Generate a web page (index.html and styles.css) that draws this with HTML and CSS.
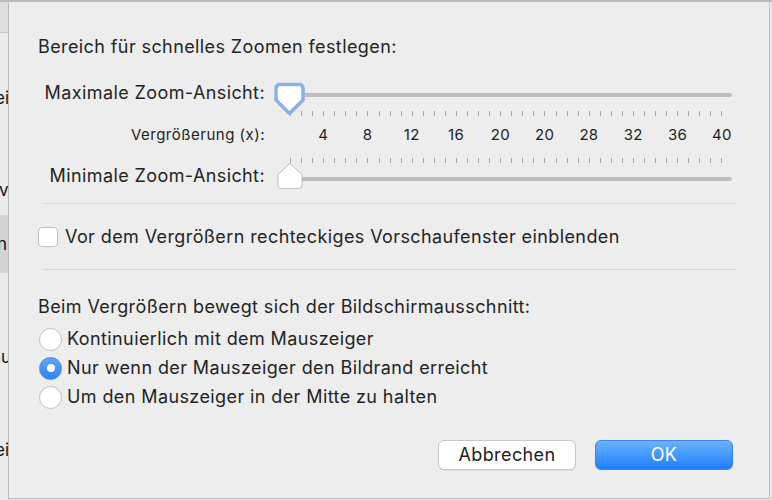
FILE: index.html
```html
<!DOCTYPE html>
<html lang="de">
<head>
<meta charset="utf-8">
<title>Zoom</title>
<link rel="stylesheet" href="styles.css">
</head>
<body>
<div class="screen">
  <aside class="bgwin">
    <div class="bg-head"></div>
    <div class="bg-item it1"><span>ei</span></div>
    <div class="bg-item it2"><span>ve</span></div>
    <div class="bg-item it3 selected"><span>n</span></div>
    <div class="bg-item it4"><span>nu</span></div>
    <div class="bg-item it5"><span>ei</span></div>
  </aside>
  <section class="dialog">
    <h1 class="title">Bereich für schnelles Zoomen festlegen:</h1>
    <div class="zoom-grid">
      <div class="lbl lbl-max">Maximale Zoom-Ansicht:</div>
      <div class="slider slider-max">
        <div class="track"></div>
        <div class="ticks"><i></i><i></i><i></i><i></i><i></i><i></i><i></i><i></i><i></i><i></i><i></i><i></i><i></i><i></i><i></i><i></i><i></i><i></i><i></i><i></i><i></i><i></i><i></i><i></i><i></i><i></i><i></i><i></i><i></i><i></i><i></i><i></i><i></i><i></i><i></i><i></i><i></i><i></i><i></i><i></i></div>
        <svg class="thumb thumb-down" width="32" height="34" viewBox="0 0 32 34">
          <path d="M6,2.5 H25 Q29,2.5 29,6.5 V18 L15.5,31.5 L2,18 V6.5 Q2,2.5 6,2.5 Z" fill="#ffffff" stroke="#8db0e6" stroke-width="3.5" stroke-linejoin="round"/>
        </svg>
      </div>
      <div class="lbl lbl-small">Vergrößerung (x):</div>
      <div class="nums"><span>4</span><span>8</span><span>12</span><span>16</span><span>20</span><span>20</span><span>28</span><span>32</span><span>36</span><span>40</span></div>
      <div class="lbl lbl-min">Minimale Zoom-Ansicht:</div>
      <div class="slider slider-min">
        <div class="ticks"><i></i><i></i><i></i><i></i><i></i><i></i><i></i><i></i><i></i><i></i><i></i><i></i><i></i><i></i><i></i><i></i><i></i><i></i><i></i><i></i><i></i><i></i><i></i><i></i><i></i><i></i><i></i><i></i><i></i><i></i><i></i><i></i><i></i><i></i><i></i><i></i><i></i><i></i><i></i><i></i></div>
        <div class="track"></div>
        <svg class="thumb thumb-up" width="28" height="28" viewBox="0 0 28 28">
          <path d="M14,1.5 L26,12.5 V23 Q26,26.5 22.5,26.5 H5.5 Q2,26.5 2,23 V12.5 Z" fill="#ffffff" stroke="#c4c4c4" stroke-width="1" stroke-linejoin="round"/>
        </svg>
      </div>
    </div>
    <div class="sep"></div>
    <div class="check-row"><span class="checkbox"></span><span>Vor dem Vergrößern rechteckiges Vorschaufenster einblenden</span></div>
    <div class="sep sep2"></div>
    <p class="question">Beim Vergrößern bewegt sich der Bildschirmausschnitt:</p>
    <div class="radios">
      <div class="radio-row"><span class="radio"></span><span>Kontinuierlich mit dem Mauszeiger</span></div>
      <div class="radio-row"><span class="radio on"></span><span>Nur wenn der Mauszeiger den Bildrand erreicht</span></div>
      <div class="radio-row"><span class="radio"></span><span>Um den Mauszeiger in der Mitte zu halten</span></div>
    </div>
    <div class="buttons">
      <button class="btn btn-cancel">Abbrechen</button>
      <button class="btn btn-ok">OK</button>
    </div>
  </section>
</div>
</body>
</html>
```

FILE: styles.css
```css
html, body {
  margin: 0;
  padding: 0;
}
body {
  width: 772px;
  height: 500px;
  overflow: hidden;
  background: #e8e8e8;
  font-family: "Inter", "Liberation Sans", sans-serif;
  color: #242424;
}
.screen {
  display: flex;
  height: 498px;
  border-top: 2px solid #b9b9b9;
}
.bgwin {
  width: 8px;
  flex: none;
  overflow: hidden;
  background: #ebebeb;
  display: flex;
  flex-direction: column;
}
.bg-head {
  height: 30px;
  flex: none;
  background: #dddddd;
  border-bottom: 1px solid #c5c5c5;
}
.bg-item {
  display: flex;
  justify-content: flex-start;
  align-items: center;
  height: 22px;
  font-size: 17px;
  line-height: 22px;
  color: #111;
  white-space: nowrap;
  flex: none;
}
.it1 { margin-top: 54px; }
.it1 span, .it5 span { margin-left: -5px; }
.it2 { margin-top: 70px; }
.it2 span { margin-left: -1px; letter-spacing: -1px; }
.it3 { margin-top: 14px; height: 58px; background: #d3d3d3; }
.it3 span { margin-left: -3px; }
.it4 { margin-top: 73px; }
.it4 span { margin-left: -9px; }
.it5 { margin-top: 71px; }

.dialog {
  flex: none;
  width: 695px;
  height: 462px;
  margin-top: 1px;
  padding: 33px 36px 0 29px;
  background: #ededed;
  border-left: 1px solid #b8b8b8;
  border-right: 1px solid #c2c2c2;
  border-bottom: 1px solid #bdbdbd;
  display: flex;
  flex-direction: column;
  font-size: 18px;
  line-height: 22px;
  letter-spacing: 0.4px;
}
.title {
  margin: 0;
  font-size: 18px;
  font-weight: 400;
  line-height: 22px;
}
.zoom-grid {
  margin-top: 22px;
  display: grid;
  grid-template-columns: 227px 457px;
  grid-template-rows: 40px 30px 45px;
  column-gap: 11px;
}
.lbl {
  text-align: right;
  white-space: nowrap;
}
.lbl-max { margin-top: 2px; }
.lbl-min { margin-top: 15px; }
.lbl-small {
  font-size: 15px;
  line-height: 20px;
  margin-top: 5px;
  letter-spacing: 0.5px;
  color: #1e1e1e;
}
.slider {
  position: relative;
  display: flex;
  flex-direction: column;
}
.track {
  margin-left: 14px;
  width: 442px;
  height: 4px;
  border-radius: 2px;
  background: #bdbdbd;
  flex: none;
}
.ticks {
  margin-left: 14px;
  width: 433px;
  height: 5px;
  display: flex;
  justify-content: space-between;
  flex: none;
}
.ticks i {
  width: 1px;
  height: 5px;
  background: #a4a4a4;
}
.slider-max .track { margin-top: 13px; }
.slider-max .ticks { margin-top: 14px; }
.slider-min .ticks { margin-top: 8px; }
.slider-min .track { margin-top: 14px; }
.thumb {
  position: absolute;
  display: block;
}
.thumb-down { left: -2px; top: 2px; }
.thumb-up { left: 0px; top: 12px; filter: drop-shadow(0 0.5px 0.5px rgba(0,0,0,0.15)); }

.nums {
  margin-left: 25px;
  width: 443px;
  display: grid;
  grid-template-columns: repeat(10, 44.3px);
  font-size: 15px;
  line-height: 20px;
  margin-top: 5px;
  letter-spacing: 0.3px;
  color: #1e1e1e;
}
.nums span {
  display: flex;
  justify-content: center;
  white-space: nowrap;
}

.sep {
  height: 1px;
  background: #d6d6d6;
  margin: 8px -4px 0 5px;
  flex: none;
}
.sep2 { margin-top: 21px; }
.check-row {
  margin-top: 22px;
  display: flex;
  align-items: center;
  height: 22px;
  white-space: nowrap;
}
.checkbox {
  width: 18px;
  height: 18px;
  border: 1px solid #bdbdbd;
  border-radius: 4px;
  background: #fff;
  margin-right: 7px;
  flex: none;
}
.question {
  margin: 26px 0 0;
  white-space: nowrap;
}
.radios {
  margin-top: 10px;
  display: flex;
  flex-direction: column;
  gap: 7px;
}
.radio-row {
  display: flex;
  align-items: center;
  height: 22px;
  white-space: nowrap;
}
.radio {
  box-sizing: border-box;
  width: 23px;
  height: 23px;
  border: 1px solid #c0c0c0;
  border-radius: 50%;
  background: #fff;
  margin-left: 1px;
  margin-right: 5px;
  flex: none;
  display: flex;
  align-items: center;
  justify-content: center;
}
.radio.on {
  border-color: #3f8cf0;
  background: linear-gradient(#5ea6fa, #2f82f5);
}
.radio.on::after {
  content: "";
  width: 8px;
  height: 8px;
  border-radius: 50%;
  background: #fff;
}
.buttons {
  margin-top: 32px;
  display: flex;
  justify-content: flex-end;
  gap: 19px;
}
.btn {
  font-family: "Inter", "Liberation Sans", sans-serif;
  font-size: 18px;
  letter-spacing: 0.4px;
  height: 30px;
  width: 138px;
  border-radius: 6px;
  padding: 0;
  line-height: 28px;
}
.btn-cancel {
  background: #ffffff;
  border: 1px solid #c6c6c6;
  color: #222;
  box-shadow: 0 1px 0 rgba(0,0,0,0.05);
}
.btn-ok {
  background: linear-gradient(#6db2fb, #1c80f9);
  border: 1px solid #3786ef;
  color: #ffffff;
}
```
